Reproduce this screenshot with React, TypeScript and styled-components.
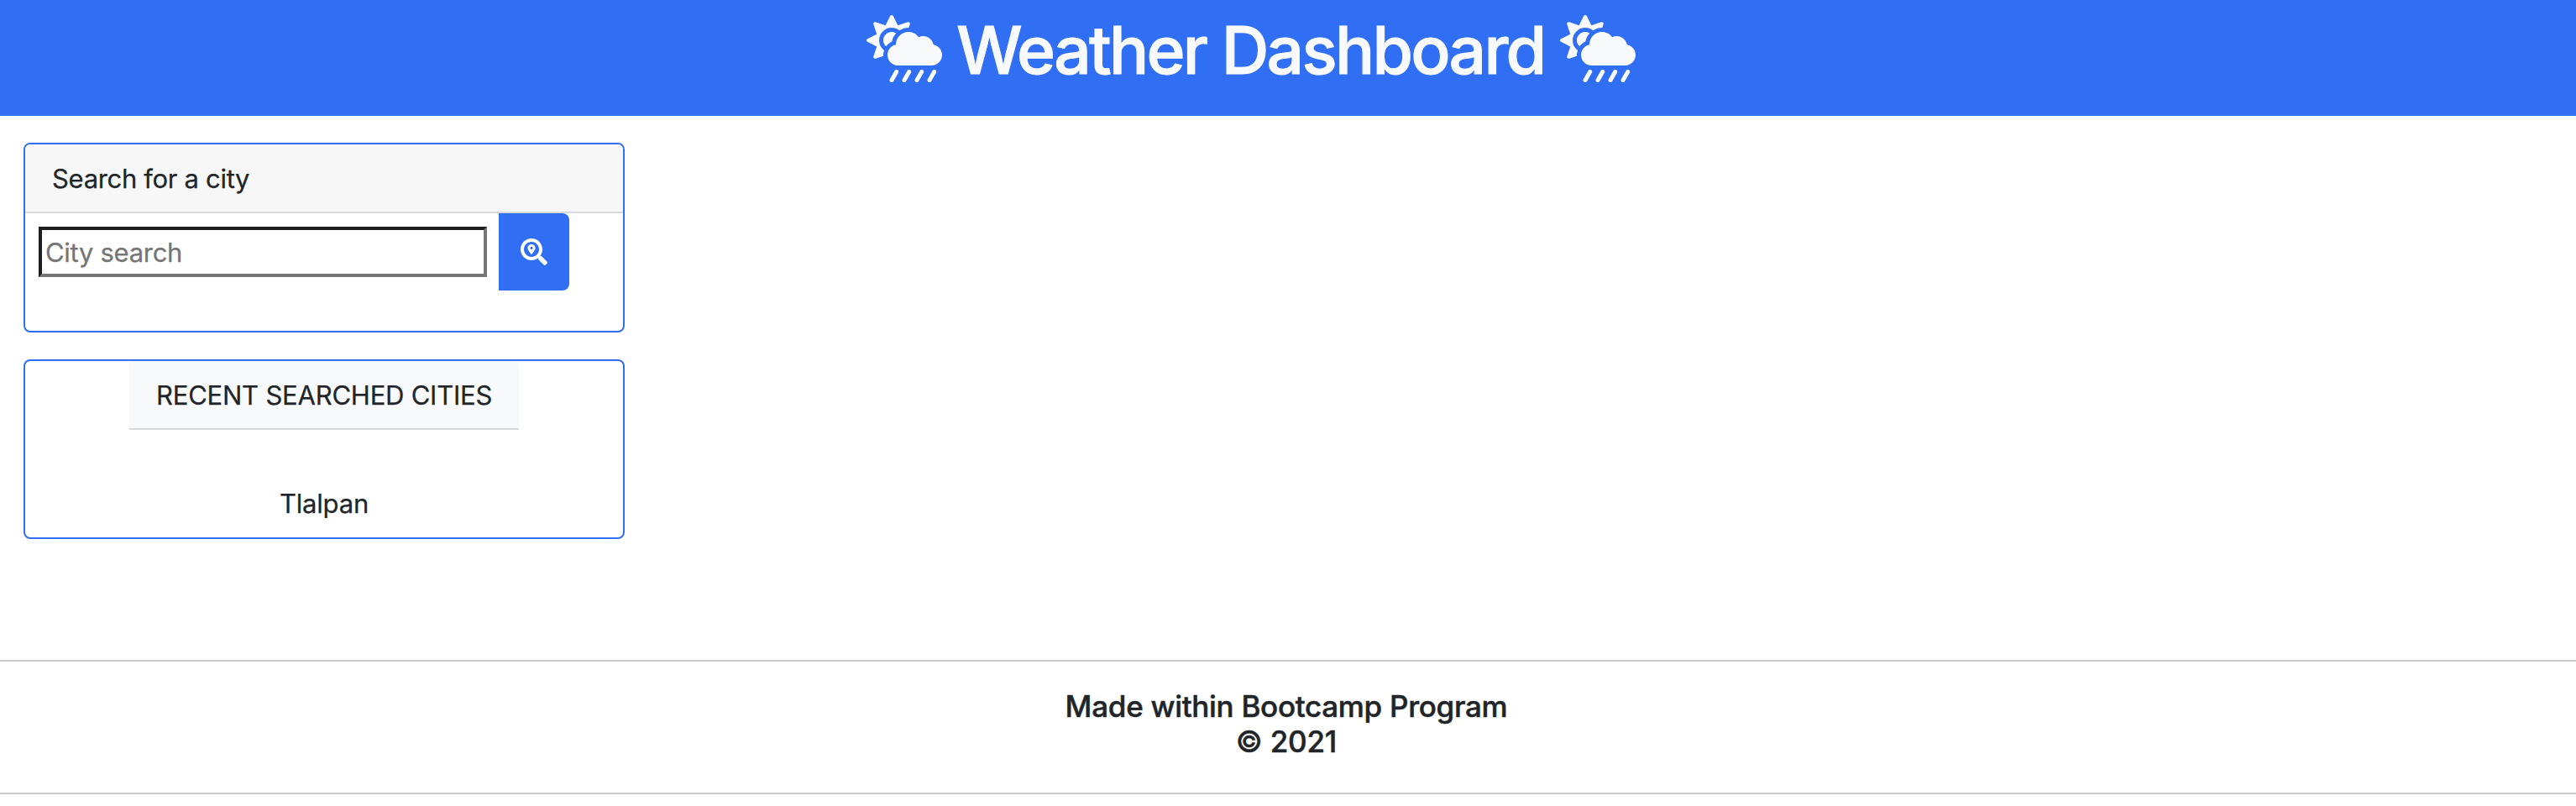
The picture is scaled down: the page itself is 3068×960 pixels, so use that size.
import React from "react";
import styled, { createGlobalStyle } from "styled-components";
import { FaCloudSunRain, FaSearchLocation } from "react-icons/fa";

const GlobalStyle = createGlobalStyle`
  *, *::before, *::after { box-sizing: border-box; }
  body {
    margin: 0;
    background: #fff;
    color: #212529;
    font-family: Inter, "Liberation Sans", sans-serif;
    font-size: 31px;
    line-height: 48px;
    -webkit-text-stroke: 0.25px currentColor;
  }
`;

const Page = styled.div`
  display: flex;
  flex-direction: column;
  height: 960px;
`;

const Header = styled.header`
  display: flex;
  justify-content: center;
  height: 138px;
  padding: 18px 88px 0 0;
  background: #306ff4;
  color: #f8f9fa;
`;

const Title = styled.h1`
  width: 719px;
  margin: -6px 0 0 17px;
  font-size: 78.5px;
  font-weight: 500;
  line-height: 96px;
  letter-spacing: -2.75px;
  white-space: nowrap;
  -webkit-text-stroke: 1px currentColor;
`;

const WeatherIcon = styled(FaCloudSunRain)`
  flex: none;
  width: 90px;
  height: 80px;
`;

const Sidebar = styled.main`
  display: flex;
  flex-direction: column;
  gap: 32px;
  flex: none;
  width: 744px;
  height: 648px;
  padding: 32px 0 0 28px;
`;

const Card = styled.section<{ $height: number; $centered?: boolean }>`
  display: flex;
  flex-direction: column;
  align-items: ${(p) => (p.$centered ? "center" : "stretch")};
  height: ${(p) => p.$height}px;
  border: 2px solid #306ff4;
  border-radius: 8px;
`;

const CardHeader = styled.div<{ $tone: string; $width?: number; $tracking: number }>`
  width: ${(p) => (p.$width ? `${p.$width}px` : "auto")};
  height: 82px;
  padding: 17px 0 0 32px;
  background: ${(p) => p.$tone};
  border-bottom: 2px solid #d8d9da;
  border-radius: 6px 6px 0 0;
  letter-spacing: ${(p) => p.$tracking}px;
  white-space: nowrap;
`;

const SearchRow = styled.form`
  display: flex;
  align-items: flex-start;
  gap: 14px;
  padding-left: 16px;
`;

const CityInput = styled.input`
  width: 534px;
  height: 60px;
  margin: 16px 0 0;
  padding: 2px 4px;
  border: 4px solid;
  border-color: #1f1f1f #767676 #767676 #1f1f1f;
  border-radius: 0;
  outline: none;
  background: #fff;
  font: inherit;
  letter-spacing: -0.3px;
  &::placeholder { color: #757575; opacity: 1; }
`;

const SearchButton = styled.button`
  display: flex;
  align-items: center;
  justify-content: center;
  width: 84px;
  height: 92px;
  padding: 0;
  border: 0;
  border-radius: 0 8px 8px 0;
  background: #306ff4;
  color: #fff;
  font-size: 32px;
`;

const City = styled.div`
  margin-top: 64px;
  letter-spacing: -0.2px;
`;

const Footer = styled.footer`
  height: 160px;
  padding: 32px 4px 0 0;
  border-top: 2px solid #c8c9ca;
  border-bottom: 2px solid #c8c9ca;
  font-size: 35px;
  font-weight: 500;
  line-height: 42px;
  text-align: center;
  -webkit-text-stroke: 0.5px currentColor;
`;

const FooterLine = styled.div<{ $tracking: number }>`
  letter-spacing: ${(p) => p.$tracking}px;
`;

export default function App() {
  return (
    <Page>
      <GlobalStyle />
      <Header>
        <WeatherIcon />
        <Title>Weather Dashboard</Title>
        <WeatherIcon />
      </Header>
      <Sidebar>
        <Card $height={226}>
          <CardHeader $tone="#f7f7f7" $tracking={-0.32}>Search for a city</CardHeader>
          <SearchRow>
            <CityInput placeholder="City search" />
            <SearchButton type="button" aria-label="Search">
              <FaSearchLocation />
            </SearchButton>
          </SearchRow>
        </Card>
        <Card $height={214} $centered>
          <CardHeader $tone="#f8f9fa" $width={464} $tracking={-0.22}>RECENT SEARCHED CITIES</CardHeader>
          <City>Tlalpan</City>
        </Card>
      </Sidebar>
      <Footer>
        <FooterLine $tracking={-0.3}>Made within Bootcamp Program</FooterLine>
        <FooterLine $tracking={-0.2}>© 2021</FooterLine>
      </Footer>
    </Page>
  );
}
